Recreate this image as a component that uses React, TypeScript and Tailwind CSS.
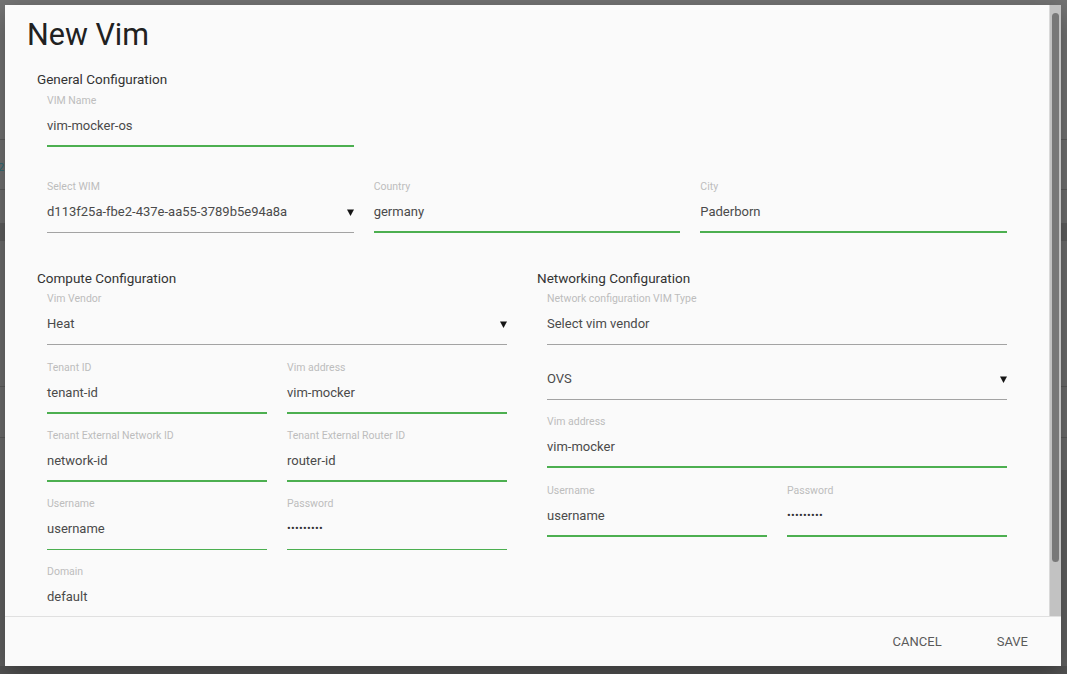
import React from "react";

type LineKind = "green2" | "green1" | "gray";

function Arrow() {
  return (
    <svg width="7" height="7" viewBox="0 0 7 7" className="shrink-0">
      <polygon points="0,0.5 7,0.5 3.5,7" fill="#151515" />
    </svg>
  );
}

function Field({
  label,
  value,
  line = "green2",
  arrow = false,
  password = false,
}: {
  label: string;
  value: string;
  line?: LineKind;
  arrow?: boolean;
  password?: boolean;
}) {
  const lineCls =
    line === "green2"
      ? "border-b-2 border-[#4caf50]"
      : line === "green1"
      ? "border-b border-[#4caf50]"
      : "border-b border-[#a3a3a3]";
  return (
    <div className="px-[10px]">
      <div className="h-[12px] text-[10.5px] leading-[12px] text-[#bdbdbd] whitespace-nowrap">
        {label}
      </div>
      <div className={`mt-[9px] h-[31px] box-border ${lineCls}`}>
        <div className="flex h-[20px] items-center justify-between">
          {password ? (
            <span className="text-[11px] leading-[20px] tracking-[0.3px] text-[#333333]">
              •••••••••
            </span>
          ) : (
            <span className="text-[13px] leading-[20px] text-[#4a4a4a] whitespace-nowrap">
              {value}
            </span>
          )}
          {arrow && <Arrow />}
        </div>
      </div>
    </div>
  );
}

function Heading({ children }: { children: React.ReactNode }) {
  return (
    <div className="h-[20px] text-[13.5px] leading-[20px] text-[#333333] whitespace-nowrap">
      {children}
    </div>
  );
}

export default function App() {
  return (
    <div className="relative h-[674px] w-full overflow-hidden bg-[#6a6a6a] font-['Roboto','Liberation_Sans',sans-serif]">
      {/* underlying page, dimmed */}
      <div className="flex flex-col">
        <div className="h-[139px] bg-[#747474]" />
        <div className="h-[1px] bg-[#5e5e5e]" />
        <div className="h-[49px] bg-[#727272] text-[11px] leading-[20px] text-[#2b6f7a] pt-[18px]">
          <span className="-ml-[2px]">2</span>
        </div>
        <div className="h-[1px] bg-[#5e5e5e]" />
        <div className="h-[33px] bg-[#707070]" />
        <div className="h-[18px] bg-[#5f5f5f]" />
        <div className="h-[145px] bg-[#6e6e6e]" />
        <div className="h-[1px] bg-[#5c5c5c]" />
        <div className="h-[50px] bg-[#6e6e6e]" />
        <div className="h-[1px] bg-[#5c5c5c]" />
        <div className="h-[32px] bg-[#6c6c6c]" />
        <div className="h-[196px] bg-[#626262]" />
        <div className="h-[20px] bg-[#545454]" />
      </div>

      {/* dialog */}
      <div className="absolute left-[5px] top-[5px] flex h-[661px] w-[1056px] flex-col bg-[#fafafa] shadow-[0_8px_24px_rgba(0,0,0,0.35)]">
        <div className="flex min-h-0 flex-1">
          <div className="min-w-0 flex-1 overflow-hidden pt-[10px]">
            <div className="ml-[22px] h-[40px] text-[30.5px] leading-[40px] text-[#212121] whitespace-nowrap">
              New Vim
            </div>

            <div className="px-[32px]">
              {/* General */}
              <div className="mt-[14px]">
                <Heading>General Configuration</Heading>
                <div className="mt-[6px] grid grid-cols-3">
                  <Field label="VIM Name" value="vim-mocker-os" />
                </div>
                <div className="mt-[34px] grid grid-cols-3">
                  <Field
                    label="Select WIM"
                    value="d113f25a-fbe2-437e-aa55-3789b5e94a8a"
                    line="gray"
                    arrow
                  />
                  <Field label="Country" value="germany" />
                  <Field label="City" value="Paderborn" />
                </div>
              </div>

              {/* Compute + Networking */}
              <div className="mt-[35px] grid grid-cols-2 gap-x-[20px]">
                <div>
                  <Heading>Compute Configuration</Heading>
                  <div className="mt-[5px]">
                    <Field label="Vim Vendor" value="Heat" line="gray" arrow />
                  </div>
                  <div className="mt-[17px] grid grid-cols-2 gap-y-[16px]">
                    <Field label="Tenant ID" value="tenant-id" />
                    <Field label="Vim address" value="vim-mocker" />
                    <Field label="Tenant External Network ID" value="network-id" />
                    <Field label="Tenant External Router ID" value="router-id" />
                    <Field label="Username" value="username" line="green1" />
                    <Field label="Password" value="" line="green1" password />
                    <Field label="Domain" value="default" line="green1" />
                  </div>
                </div>

                <div>
                  <Heading>Networking Configuration</Heading>
                  <div className="mt-[5px]">
                    <Field
                      label="Network configuration VIM Type"
                      value="Select vim vendor"
                      line="gray"
                    />
                  </div>
                  <div className="mt-[3px]">
                    <Field label="" value="OVS" line="gray" arrow />
                  </div>
                  <div className="mt-[16px]">
                    <Field label="Vim address" value="vim-mocker" />
                  </div>
                  <div className="mt-[17px] grid grid-cols-2">
                    <Field label="Username" value="username" />
                    <Field label="Password" value="" password />
                  </div>
                </div>
              </div>
            </div>
          </div>

          {/* scrollbar */}
          <div className="flex w-[12px] shrink-0 flex-col border-l border-[#d9d9d9] bg-[#c2c2c2]">
            <div className="mx-[2px] mt-[8px] h-[549px] rounded-full bg-[#787878]" />
          </div>
        </div>

        {/* footer */}
        <div className="flex h-[50px] shrink-0 items-center justify-end gap-[23px] border-t border-[#e0e0e0] pr-[17px]">
          <button className="px-[16px] text-[13px] leading-[36px] text-[#5a5a5a] uppercase">
            Cancel
          </button>
          <button className="px-[16px] text-[13px] leading-[36px] text-[#5a5a5a] uppercase">
            Save
          </button>
        </div>
      </div>
    </div>
  );
}
